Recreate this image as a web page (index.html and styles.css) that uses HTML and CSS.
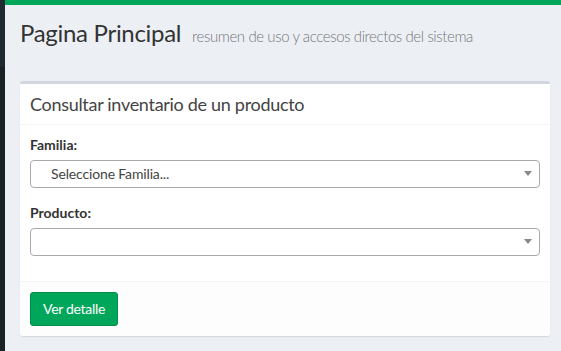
FILE: index.html
```html
<!DOCTYPE html>
<html lang="es">
<head>
<meta charset="utf-8">
<title>Pagina Principal</title>
<link rel="stylesheet" href="styles.css">
</head>
<body>
<div class="layout">
  <aside class="sidebar"></aside>
  <div class="main">
    <div class="topbar"></div>
    <section class="content-header">
      <h1>Pagina Principal <small>resumen de uso y accesos directos del sistema</small></h1>
    </section>
    <section class="content">
      <div class="box">
        <div class="box-header">
          <h3 class="box-title">Consultar inventario de un producto</h3>
        </div>
        <div class="box-body">
          <div class="form-group">
            <label class="label">Familia:</label>
            <div class="select"><span class="select-text">Seleccione Familia...</span><b class="arrow"></b></div>
          </div>
          <div class="form-group">
            <label class="label">Producto:</label>
            <div class="select"><span class="select-text"></span><b class="arrow"></b></div>
          </div>
        </div>
        <div class="box-footer">
          <button class="btn">Ver detalle</button>
        </div>
      </div>
    </section>
  </div>
</div>
</body>
</html>
```
FILE: styles.css
```css
html, body {
  margin: 0;
  padding: 0;
}
body {
  font-family: "Lato", "Liberation Sans", sans-serif;
  font-size: 14px;
  color: #333;
  background: #ecf0f5;
  width: 561px;
  height: 351px;
  overflow: hidden;
}
.layout {
  display: flex;
  height: 351px;
}
.sidebar {
  width: 5px;
  flex: 0 0 5px;
  background: linear-gradient(#1e2a30 0, #1e2a30 67px, #1a2226 67px);
}
.main {
  flex: 1;
  min-width: 0;
}
.topbar {
  height: 5px;
  background: #00a65a;
}
.content-header {
  padding: 15px 15px 0 15px;
}
.content-header h1 {
  margin: 0;
  font-size: 24px;
  line-height: 26px;
  font-weight: 400;
  color: #333;
  letter-spacing: -0.3px;
}
.content-header small {
  font-size: 15px;
  color: #777;
  padding-left: 5px;
  font-weight: 300;
  letter-spacing: -0.4px;
}
.content {
  padding: 32px 11px 0 15px;
}
.box {
  background: #fff;
  border-top: 3px solid #d2d6de;
  border-radius: 3px;
  box-shadow: 0 1px 1px rgba(0, 0, 0, 0.1);
}
.box-header {
  padding: 10px;
  border-bottom: 1px solid #f4f4f4;
}
.box-title {
  margin: 0;
  font-size: 18px;
  line-height: 20px;
  font-weight: 400;
  color: #444;
  letter-spacing: -0.3px;
}
.box-body {
  padding: 10px;
}
.form-group {
  margin-bottom: 15px;
}
.label {
  display: block;
  font-weight: 700;
  line-height: 20px;
  margin-bottom: 5px;
  color: #333;
}
.select {
  position: relative;
  height: 28px;
  box-sizing: border-box;
  border: 1px solid #aaa;
  border-radius: 4px;
  background: #fff;
}
.select-text {
  display: block;
  padding-left: 20px;
  line-height: 26px;
  color: #444;
  letter-spacing: -0.15px;
}
.arrow {
  position: absolute;
  right: 7px;
  top: 10px;
  width: 0;
  height: 0;
  border-top: 5px solid #888;
  border-left: 4px solid transparent;
  border-right: 4px solid transparent;
}
.box-footer {
  padding: 10px;
  border-top: 1px solid #f4f4f4;
  background: #fdfdfd;
  border-radius: 0 0 3px 3px;
}
.btn {
  font-family: inherit;
  font-size: 14px;
  line-height: 20px;
  padding: 6px 12px;
  background: #00a65a;
  border: 1px solid #008d4c;
  border-radius: 3px;
  color: #fff;
  font-weight: 400;
  letter-spacing: -0.3px;
}
```
